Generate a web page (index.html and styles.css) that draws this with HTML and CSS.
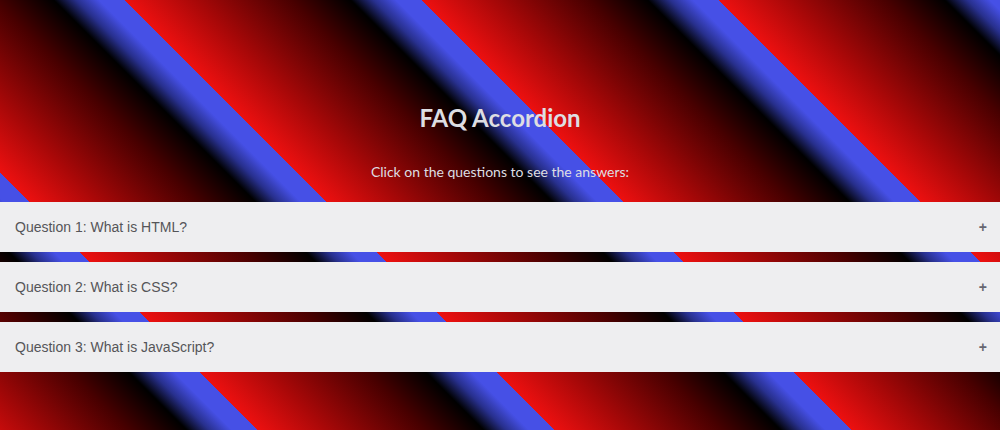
FILE: index.html
```html
<!DOCTYPE html>
<html lang="en">
<head>
<meta charset="utf-8">
<title>FAQ Accordion</title>
<link rel="stylesheet" href="styles.css">
</head>
<body>
<div class="page">
  <header class="intro">
    <h1 class="title">FAQ Accordion</h1>
    <p class="lead">Click on the questions to see the answers:</p>
  </header>
  <div class="accordion">
    <div class="item"><span class="question">Question 1: What is HTML?</span><span class="toggle">+</span></div>
    <div class="item"><span class="question">Question 2: What is CSS?</span><span class="toggle">+</span></div>
    <div class="item"><span class="question">Question 3: What is JavaScript?</span><span class="toggle">+</span></div>
  </div>
</div>
</body>
</html>
```
FILE: styles.css
```css
html, body {
  margin: 0;
  padding: 0;
}

.page {
  min-height: 430px;
  box-sizing: border-box;
  padding-top: 104px;
  background: repeating-linear-gradient(45deg,
    #ec1010 182.4px,
    #a80808 232px,
    #480000 300px,
    #000000 342px,
    #28308e 358px,
    #4650e6 374px,
    #4650e6 392.4px);
}

.intro {
  text-align: center;
  color: #dedee2;
  font-family: Lato, "Open Sans", sans-serif;
}

.title {
  margin: 0;
  font-size: 24px;
  line-height: 28px;
  font-weight: 700;
}

.lead {
  margin: 30px 0 0;
  font-size: 14px;
  line-height: 20px;
}

.accordion {
  margin-top: 20px;
  display: flex;
  flex-direction: column;
  gap: 10px;
}

.item {
  height: 50px;
  box-sizing: border-box;
  padding: 0 13px 0 15px;
  display: flex;
  align-items: center;
  justify-content: space-between;
  background: #eeeef0;
  color: #555558;
  font-family: "Liberation Sans", Arial, sans-serif;
  font-size: 14px;
}

.toggle {
  font-weight: 700;
  font-size: 14px;
  color: #666670;
}
```
